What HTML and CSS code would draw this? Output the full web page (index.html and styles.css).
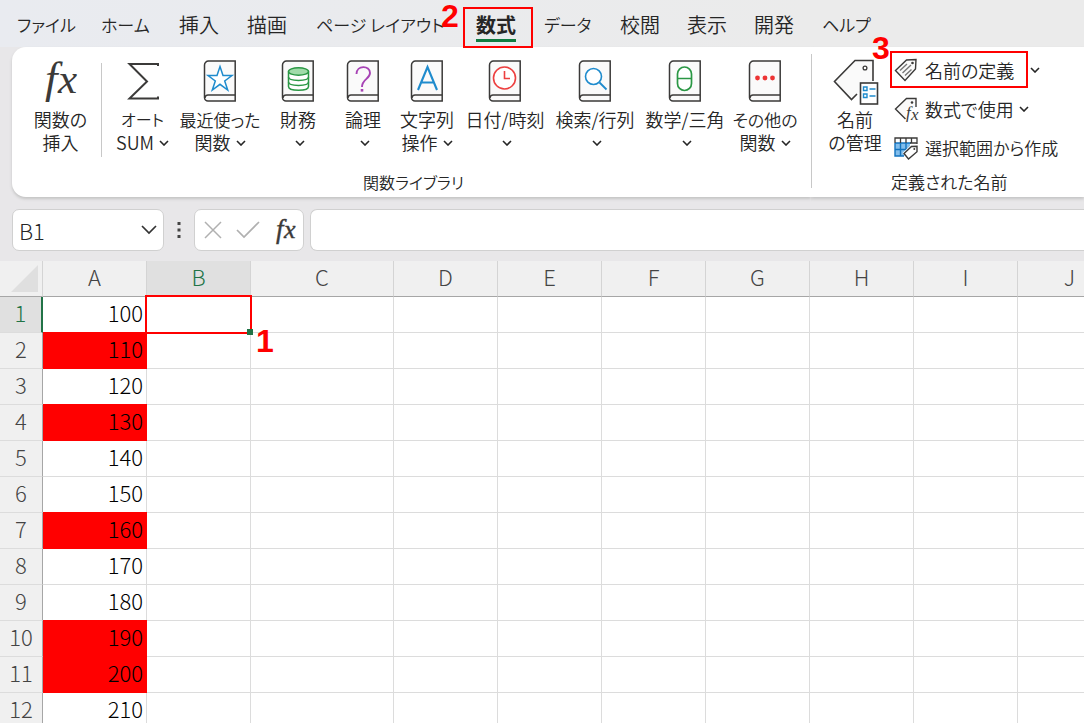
FILE: index.html
```html
<!DOCTYPE html>
<html lang="ja">
<head>
<meta charset="utf-8">
<meta name="viewport" content="width=device-width, initial-scale=1">
<title>B1</title>
<link rel="stylesheet" href="styles.css">
</head>
<body>
<svg class="defs" aria-hidden="true">
  <symbol id="chev" viewBox="0 0 10 6"><path d="M1 1l4 4 4-4" fill="none" stroke="currentColor" stroke-width="1.600"/></symbol>
  <symbol id="book" viewBox="0 0 34 42"><path d="M4.500 1H32.200V41H5a3.500 3.500 0 0 1-3.500-3.500V5A4 4 0 0 1 5.500 1z" fill="#fafafa" stroke="#3b3a39" stroke-width="1.500"/><path d="M32 35H5.500a3 3 0 0 0-3.500 3" fill="none" stroke="#3b3a39" stroke-width="1.500"/></symbol>
</svg>

<nav class="tabs">
  <button class="tab kana">ファイル</button>
  <button class="tab kana">ホーム</button>
  <button class="tab">挿入</button>
  <button class="tab">描画</button>
  <button class="tab kana">ページ レイアウト</button>
  <button class="tab active"><span class="underlined">数式</span><span class="mark mark-2">2</span></button>
  <button class="tab kana after">データ</button>
  <button class="tab">校閲</button>
  <button class="tab">表示</button>
  <button class="tab">開発</button>
  <button class="tab kana">ヘルプ</button>
</nav>

<section class="ribbon">
  <div class="group library">
    <div class="tools">
      <button class="tool">
        <svg class="icon" width="44" height="44" viewBox="0 0 44 44"><text x="6" y="33" class="fx" font-size="45">f</text><text x="19" y="33" class="fx" font-size="43">x</text></svg>
        <span>関数の</span><span>挿入</span>
      </button>
      <button class="tool first">
        <svg class="icon" width="34" height="44" viewBox="0 0 34 44"><path d="M32 6V4H3.500L21 21.500 3.500 38.500H32V36.500" fill="none" stroke="#3b3a39" stroke-width="2"/></svg>
        <span class="kana-label">オート</span><span>SUM <svg class="chev"><use href="#chev"/></svg></span>
      </button>
      <button class="tool">
        <svg class="icon" width="34" height="44" viewBox="0 0 34 44"><use href="#book" width="34" height="42"/><path d="M17 6.500l3 9h9l-7.300 5.500 3 9-7.700-5.700-7.700 5.700 3-9L5 15.500h9z" fill="#fff" stroke="#1e8bcd" stroke-width="1.500"/></svg>
        <span class="kana-mix">最近使った</span><span>関数 <svg class="chev"><use href="#chev"/></svg></span>
      </button>
      <button class="tool">
        <svg class="icon" width="34" height="44" viewBox="0 0 34 44"><use href="#book" width="34" height="42"/><path d="M7.500 11.500v15c0 5 20 5 20 0v-15" fill="#fff" stroke="#2a9744" stroke-width="1.500"/><path d="M7.500 17c0 4.500 20 4.500 20 0M7.500 22c0 4.500 20 4.500 20 0" fill="none" stroke="#2a9744" stroke-width="1.500"/><ellipse cx="17.500" cy="11.500" rx="10" ry="3.700" fill="#a0dba9" stroke="#2a9744" stroke-width="1.500"/></svg>
        <span>財務</span><span class="alone"><svg class="chev"><use href="#chev"/></svg></span>
      </button>
      <button class="tool">
        <svg class="icon" width="34" height="44" viewBox="0 0 34 44"><use href="#book" width="34" height="42"/><path d="M10.500 14c0-9 13.500-9 13.500-1 0 6-8 6-8 14" fill="none" stroke="#a743b5" stroke-width="1.900"/><rect x="14.700" y="29" width="2.600" height="2.600" fill="#a743b5"/></svg>
        <span>論理</span><span class="alone"><svg class="chev"><use href="#chev"/></svg></span>
      </button>
      <button class="tool">
        <svg class="icon" width="34" height="44" viewBox="0 0 34 44"><use href="#book" width="34" height="42"/><path d="M8 30L17.500 7 27 30M11.200 22.500h12.600" fill="none" stroke="#1e8bcd" stroke-width="2.100"/></svg>
        <span>文字列</span><span>操作 <svg class="chev"><use href="#chev"/></svg></span>
      </button>
      <button class="tool">
        <svg class="icon" width="34" height="44" viewBox="0 0 34 44"><use href="#book" width="34" height="42"/><circle cx="16.500" cy="18" r="11" fill="#fff" stroke="#ed4040" stroke-width="1.600"/><path d="M16.500 11v7.500H22" fill="none" stroke="#ed4040" stroke-width="1.600"/></svg>
        <span>日付/時刻</span><span class="alone"><svg class="chev"><use href="#chev"/></svg></span>
      </button>
      <button class="tool">
        <svg class="icon" width="34" height="44" viewBox="0 0 34 44"><use href="#book" width="34" height="42"/><circle cx="15.500" cy="16.500" r="8" fill="#fff" stroke="#1e8bcd" stroke-width="1.600"/><path d="M21.500 22.500l7 7" stroke="#1e8bcd" stroke-width="1.800"/></svg>
        <span>検索/行列</span><span class="alone"><svg class="chev"><use href="#chev"/></svg></span>
      </button>
      <button class="tool">
        <svg class="icon" width="34" height="44" viewBox="0 0 34 44"><use href="#book" width="34" height="42"/><rect x="9.500" y="7" width="14" height="23.500" rx="7" fill="#fff" stroke="#2a9744" stroke-width="1.700"/><path d="M9.500 18.500h14" stroke="#2a9744" stroke-width="1.500"/></svg>
        <span>数学/三角</span><span class="alone"><svg class="chev"><use href="#chev"/></svg></span>
      </button>
      <button class="tool">
        <svg class="icon" width="34" height="44" viewBox="0 0 34 44"><use href="#book" width="34" height="42"/><g fill="#ed3434"><circle cx="9.500" cy="18" r="2.400"/><circle cx="17" cy="18" r="2.400"/><circle cx="24.500" cy="18" r="2.400"/></g></svg>
        <span class="kana-mix">その他の</span><span>関数 <svg class="chev"><use href="#chev"/></svg></span>
      </button>
    </div>
    <div class="caption">関数ライブラリ</div>
  </div>

  <div class="group names">
    <button class="tool">
      <svg class="icon" width="48" height="48" viewBox="0 -1 48 48"><path d="M26 35L20.500 40.500 3.500 22.500 24 1.500H42V22" fill="#fafafa" stroke="#3b3a39" stroke-width="1.600"/><circle cx="34" cy="9" r="1.900" fill="#fff" stroke="#3b3a39" stroke-width="1.300"/><rect x="29.500" y="24" width="17" height="21" fill="#fff" stroke="#3b3a39" stroke-width="1.600"/><path d="M32.500 28h3.500v3.500h-3.500zM32.500 35h3.500v3.500h-3.500zM38.500 30h6M38.500 37h6" fill="none" stroke="#1e8bcd" stroke-width="1.400"/></svg>
      <span>名前</span><span>の管理</span>
    </button>
    <div class="list">
      <div class="split">
        <button class="small boxed">
          <svg width="24" height="24" viewBox="0 0 24 24"><path d="M1.500 12.500L12.500 2l9.500-.5-.5 9.500L11 22.500z" fill="#fafafa" stroke="#3b3a39" stroke-width="1.400"/><circle cx="18.500" cy="5" r="1.300" fill="#3b3a39"/><path d="M6 12.500L13 6M8.500 15l8.500-8M11 17.500l6.500-6" stroke="#777" stroke-width="1.400"/></svg>
          <span>名前の定義</span><span class="mark mark-3">3</span>
        </button>
        <button class="more" aria-label="名前の定義 メニュー"><svg class="chev"><use href="#chev"/></svg></button>
      </div>
      <button class="small">
        <svg width="24" height="24" viewBox="0 0 24 24"><path d="M11.500 22L1.500 12 12.500 1.500H22V10" fill="#fafafa" stroke="#3b3a39" stroke-width="1.400"/><circle cx="18" cy="5.500" r="1.300" fill="#3b3a39"/><path d="M12 12h12v12H12z" fill="#fff"/><text x="12" y="21" class="fx" font-size="17">f</text><text x="17" y="23" class="fx" font-size="17">x</text></svg>
        <span>数式で使用</span><svg class="chev"><use href="#chev"/></svg>
      </button>
      <button class="small long">
        <svg width="24" height="24" viewBox="0 0 24 24"><path d="M1 7h15v6l-6 7H1z" fill="#83beec"/><path d="M6.500 7v13M1 13.500h13M12 7v8M1 7v13h9M1 7h16" fill="none" stroke="#1373be" stroke-width="1.400"/><path d="M1 7V2h22v6M6.500 2v5M12 2v5M17.500 2v5M16 7h7" fill="none" stroke="#3b3a39" stroke-width="1.300"/><path d="M8.500 17l8.500-8h8v8l-9 8z" fill="#fff"/><path d="M10 17.500l7.500-7 5.500-.3v5.600L14.500 23z" fill="#fff" stroke="#3b3a39" stroke-width="1.400"/><circle cx="20.300" cy="13" r="1" fill="#3b3a39"/></svg>
        <span>選択範囲から作成</span>
      </button>
    </div>
    <div class="caption">定義された名前</div>
  </div>
</section>

<section class="formula-bar">
  <div class="name-box">
    <input type="text" value="B1" aria-label="名前ボックス">
    <button aria-label="名前の一覧"><svg width="16" height="10" viewBox="0 0 16 10"><path d="M1 1l7 7 7-7" fill="none" stroke="#333" stroke-width="1.700"/></svg></button>
  </div>
  <svg class="dots" width="4" height="16" viewBox="0 0 4 16"><path d="M.5 0h3v3h-3zM.5 6.500h3v3h-3zM.5 13h3v3h-3z" fill="#444"/></svg>
  <div class="actions">
    <button aria-label="キャンセル"><svg width="18" height="18" viewBox="0 0 18 18"><path d="M1 1l16 16M17 1L1 17" stroke="#b0b0b0" stroke-width="1.500"/></svg></button>
    <button aria-label="入力"><svg width="24" height="18" viewBox="0 0 24 18"><path d="M1 9l7 7L23 1" fill="none" stroke="#b0b0b0" stroke-width="1.700"/></svg></button>
    <button aria-label="関数の挿入"><svg width="24" height="26" viewBox="0 0 24 26"><text x="3" y="21" class="fx bold" font-size="27">f</text><text x="11" y="21" class="fx bold" font-size="26">x</text></svg></button>
  </div>
  <input class="formula" type="text" aria-label="数式バー">
</section>

<main class="sheet">
  <table>
    <colgroup><col class="c-head"><col><col><col class="c-wide"><col><col><col><col><col><col><col></colgroup>
    <thead>
      <tr><th class="corner"><svg width="28" height="28" viewBox="0 0 28 28"><path d="M27 0v27H0z" fill="#dfdfdf"/></svg></th><th>A</th><th class="on">B</th><th>C</th><th>D</th><th>E</th><th>F</th><th>G</th><th>H</th><th>I</th><th>J</th></tr>
    </thead>
    <tbody>
      <tr><th class="on">1</th><td>100</td><td class="selected"><span class="handle"></span><span class="mark mark-1">1</span></td><td></td><td></td><td></td><td></td><td></td><td></td><td></td><td></td></tr>
      <tr><th>2</th><td class="red">110</td><td></td><td></td><td></td><td></td><td></td><td></td><td></td><td></td><td></td></tr>
      <tr><th>3</th><td>120</td><td></td><td></td><td></td><td></td><td></td><td></td><td></td><td></td><td></td></tr>
      <tr><th>4</th><td class="red">130</td><td></td><td></td><td></td><td></td><td></td><td></td><td></td><td></td><td></td></tr>
      <tr><th>5</th><td>140</td><td></td><td></td><td></td><td></td><td></td><td></td><td></td><td></td><td></td></tr>
      <tr><th>6</th><td>150</td><td></td><td></td><td></td><td></td><td></td><td></td><td></td><td></td><td></td></tr>
      <tr><th>7</th><td class="red">160</td><td></td><td></td><td></td><td></td><td></td><td></td><td></td><td></td><td></td></tr>
      <tr><th>8</th><td>170</td><td></td><td></td><td></td><td></td><td></td><td></td><td></td><td></td><td></td></tr>
      <tr><th>9</th><td>180</td><td></td><td></td><td></td><td></td><td></td><td></td><td></td><td></td><td></td></tr>
      <tr><th>10</th><td class="red">190</td><td></td><td></td><td></td><td></td><td></td><td></td><td></td><td></td><td></td></tr>
      <tr><th>11</th><td class="red">200</td><td></td><td></td><td></td><td></td><td></td><td></td><td></td><td></td><td></td></tr>
      <tr><th>12</th><td>210</td><td></td><td></td><td></td><td></td><td></td><td></td><td></td><td></td><td></td></tr>
    </tbody>
  </table>
</main>
</body>
</html>
```
FILE: styles.css
```css
* { box-sizing: border-box; }

body {
  margin: 0;
  height: 100vh;
  padding-bottom: 2px;
  display: flex;
  flex-direction: column;
  overflow: hidden;
  background: #fff;
  color: #262626;
  font-family: "Noto Sans CJK JP", "Noto Sans", sans-serif;
  font-weight: 350;
  font-feature-settings: "palt";
}

button, input {
  font: inherit;
  font-feature-settings: inherit;
  color: inherit;
  background: none;
  border: 0;
  padding: 0;
  margin: 0;
}

svg { overflow: visible; }
.defs { display: none; }
.chev { width: 10px; height: 6px; flex: none; }
.fx { font-family: "Liberation Serif", serif; font-style: italic; font-weight: 400; fill: #3b3a39; }
.fx.bold { stroke: #3b3a39; stroke-width: 0.4px; }

.mark {
  position: absolute;
  font: bold 32px/32px "Liberation Sans", Arial, sans-serif;
  color: #f00;
}
.mark-1 { left: 109px; top: 28px; }
.mark-2 { left: -24px; top: -9px; }
.mark-3 { left: -20px; top: -21px; }

.tabs {
  flex: none;
  display: grid;
  grid-template-columns: 84px 78px 68px 69px 147px 70px 87px 67px 67px 68px 1fr;
  padding: 7px 0 0 17px;
  height: 47px;
  background: linear-gradient(90deg, #e9ebf0, #ebebeb 75%);
}
.tab {
  height: 41px;
  padding-bottom: 5px;
  font-size: 20px;
  line-height: 36px;
  text-align: left;
  white-space: nowrap;
}
.tab.kana { font-size: 17px; }
.tab.after { padding-left: 11px; }
.tab.active {
  position: relative;
  z-index: 1;
  display: flex;
  justify-content: center;
  align-items: flex-start;
  border: 2px solid #f00;
  font-weight: 700;
  padding: 0 4px 0 0;
}
.underlined {
  height: 33px;
  line-height: 31px;
  border-bottom: 3px solid #107c41;
}

.ribbon {
  flex: none;
  display: flex;
  height: 162px;
  padding: 0 0 12px 12px;
  background: #e8e7e9;
}
.group {
  display: grid;
  grid-template-rows: 1fr 30px;
  background: #fff;
  box-shadow: 0 2px 3px #c4c4c4;
}
.library {
  flex: none;
  width: 799px;
  border-radius: 14px 0 0 14px;
}
.tools {
  display: grid;
  grid-template-columns: 89px 79px 80px 76px 54px 74px 82px 98px 82px 78px;
}
.tool {
  display: flex;
  flex-direction: column;
  align-items: center;
  padding-top: 11px;
  font-size: 18px;
  line-height: 23px;
  white-space: nowrap;
}
.tool .icon { height: 48px; flex: none; margin-bottom: 2px; }
.tool span { display: flex; align-items: center; gap: 5px; height: 23px; }
.tool:first-child { padding-left: 8px; }
.tool .alone { padding-left: 4px; }
.tool .kana-mix { font-size: 17px; }
.tool.first {
  padding-left: 4px;
  background: linear-gradient(#c8c8c8, #c8c8c8) 0 16px / 1px 94px no-repeat;
}
.tool .kana-label { font-size: 16px; }
.caption { text-align: center; font-size: 17px; line-height: 30px; }
.library .caption { font-size: 16px; padding-left: 4px; }
.names {
  flex: 1;
  grid-template-columns: 80px 1fr;
  background: linear-gradient(#c8c8c8, #c8c8c8) 0 7px / 1px 134px no-repeat #fff;
  clip-path: inset(-20px 0 -6px 0);
}
.names .tool:first-child { padding-left: 8px; }
.names .caption { grid-column: 1 / -1; padding-left: 80px; text-align: left; }
.list { display: flex; flex-direction: column; gap: 2px; padding: 4px 0 0; }
.small {
  position: relative;
  display: flex;
  align-items: center;
  gap: 7px;
  height: 37px;
  padding: 0 0 0 3px;
  font-size: 18px;
  white-space: nowrap;
}
.small.long { font-size: 17px; }
.small .chev { margin-left: -2px; }
.split { display: flex; align-items: center; gap: 2px; }
.boxed { width: 138px; margin-left: -1px; padding-left: 2px; border: 2px solid #f00; }
.more { display: flex; }

.formula-bar {
  flex: none;
  display: flex;
  align-items: center;
  height: 52px;
  padding: 0 0 10px 12px;
  background: #e8e7e9;
}
.name-box, .actions, .formula {
  height: 42px;
  border: 1px solid #d0d0d0;
  border-radius: 7px;
  background: #fff;
}
.name-box { display: flex; align-items: center; width: 152px; padding: 0 6px; }
.name-box input { flex: 1; min-width: 0; font-size: 22px; font-weight: 300; height: 40px; }
.name-box button, .actions button { display: flex; }
.dots { margin: 0 13px; }
.actions { display: flex; align-items: center; justify-content: space-between; width: 110px; padding: 0 6px 0 9px; margin-right: 6px; }
.formula { flex: 1; min-width: 0; border-right: 0; border-radius: 7px 0 0 7px; }

.sheet { flex: 1; min-height: 0; overflow: hidden; }
table {
  table-layout: fixed;
  width: 1122px;
  border-collapse: separate;
  border-spacing: 0;
  font-size: 22px;
  font-weight: 300;
  line-height: 31px;
}
.c-head { width: 43px; }
col { width: 104px; }
.c-wide { width: 143px; }
th, td {
  height: 36px;
  padding: 0 0 4px;
  border: solid #dcdcdc;
  border-width: 0 1px 1px 0;
}
th { font-weight: 300; background: #f0f0f0; color: #444; }
thead th { border-bottom-color: #a6a6a6; border-right-color: #d4d4d4; }
tbody th { border-right-color: #a6a6a6; }
td { color: #000; text-align: right; padding-right: 3px; }
th.on { background: #e0e0e0; color: #217346; }
tbody th.on { border-right: 2px solid #217346; }
.corner { vertical-align: bottom; text-align: right; padding: 0 3px 3px 0; line-height: 0; }
.corner svg { display: inline-block; }
.red { background: #f00; border-color: #f00; box-shadow: 0 -1px #f00; }
.selected { position: relative; }
.selected::before {
  content: "";
  position: absolute;
  inset: -2px;
  border: 2px solid #f00;
}
.handle { position: absolute; right: -3px; bottom: -3px; width: 6px; height: 6px; background: #217346; }
```
